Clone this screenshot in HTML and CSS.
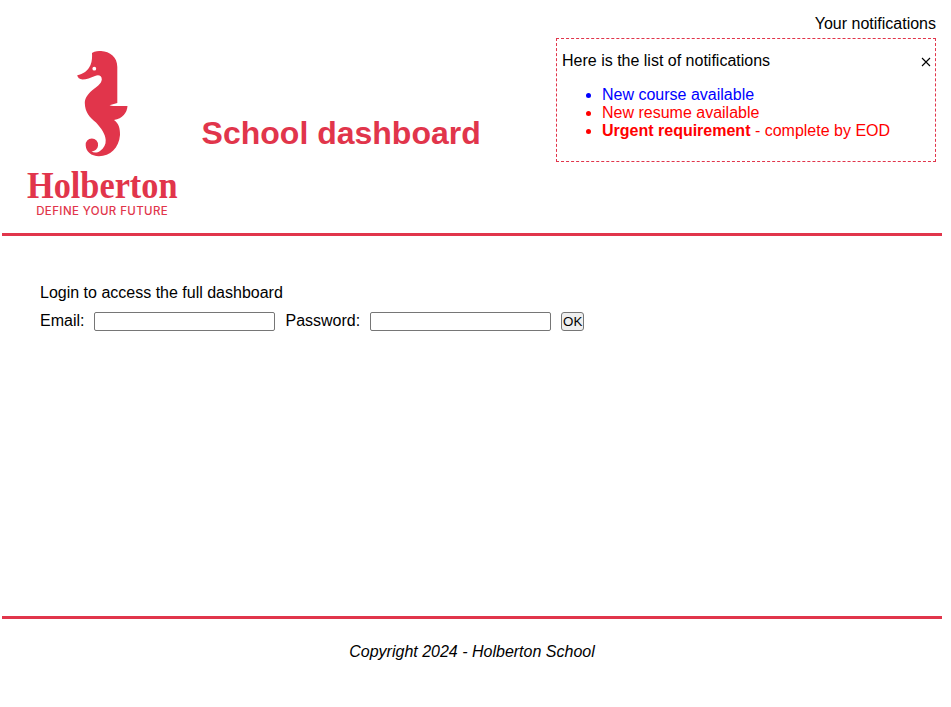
FILE: index.html
```html
<!DOCTYPE html>
<html lang="en">
<head>
<meta charset="utf-8">
<title>School dashboard</title>
<link rel="stylesheet" href="styles.css">
</head>
<body>
<header class="header">
  <svg class="logo" viewBox="2 33 200 200" role="img" aria-label="Holberton logo">
    <path d="M92 53C95 51 99 51 101 51C110 51.500 117.300 57 117.300 67V103L109.500 105.200C112 106 114 106 117 106H127.500C127 113 122.500 118.500 114 120C118.500 123 120.200 128 120 135C119 148 110 156.200 99 156.200C91 156.200 86 151.500 85.700 145.500A6.200 6.200 0 1 1 98 145.500C97.800 148.500 95.500 151 91.500 151.500C94 153.200 97.500 152.800 100 151C104 148 106 144.500 105.700 140C105.300 134 101.500 128.500 96 122.500C89.500 117.500 85 112 84.800 103C84.800 98 88 94 92 90.500C96 87 101.500 84 101.800 79.500C101.800 75.500 98.500 74.500 95 76C90.500 77.800 86.500 79.500 82.500 79.500C79.500 79.200 77.500 77.500 77.200 75.200C83 74 88 71 90.500 65C92.200 61 92.200 57 92 53Z"/>
    <circle class="logo-eye" cx="94.300" cy="68.700" r="1.900"/>
    <text class="logo-name" x="27" y="198.300" textLength="150.500" lengthAdjust="spacingAndGlyphs">Holberton</text>
    <text class="logo-tagline" x="36.200" y="214.700" textLength="132" lengthAdjust="spacingAndGlyphs">DEFINE YOUR FUTURE</text>
  </svg>
  <h1 class="title">School dashboard</h1>
  <section class="notifications">
    <div class="notifications-title">Your notifications</div>
    <div class="notifications-panel">
      <div class="panel-head">
        <p>Here is the list of notifications</p>
        <svg class="close" viewBox="0 0 10 10"><path d="M1 1L9 9M9 1L1 9"/></svg>
      </div>
      <ul>
        <li class="default">New course available</li>
        <li class="urgent">New resume available</li>
        <li class="urgent"><strong>Urgent requirement</strong> - complete by EOD</li>
      </ul>
    </div>
  </section>
</header>
<main class="login">
  <p>Login to access the full dashboard</p>
  <form class="form">
    <label for="email">Email:</label>
    <input id="email" type="email">
    <label for="password">Password:</label>
    <input id="password" type="password">
    <button type="button">OK</button>
  </form>
</main>
<footer class="footer">Copyright 2024 - Holberton School</footer>
</body>
</html>
```
FILE: styles.css
```css
* {
  box-sizing: border-box;
}

body {
  width: 940px;
  margin: 0 0 0 2px;
  background: #fff;
  color: #000;
  font: 16px/18px "Liberation Sans", Arial, sans-serif;
}

.header {
  display: flex;
  align-items: flex-start;
  height: 236px;
  border-bottom: 3px solid #e1354b;
}

.logo {
  width: 200px;
  height: 200px;
  margin-top: 33px;
  fill: #e1354b;
}

.logo .logo-eye {
  fill: #fff;
}

.logo-name {
  font: bold 38.5px "Liberation Serif", serif;
}

.logo-tagline {
  font: 500 11.3px Inter, sans-serif;
  letter-spacing: 0.4px;
}

.title {
  margin: 115px 0 0 -0.4px;
  color: #e1354b;
  font-size: 32px;
  line-height: 36px;
  white-space: nowrap;
}

.notifications {
  width: 380px;
  margin: 15px 6px 0 auto;
}

.notifications-title {
  text-align: right;
}

.notifications-panel {
  height: 124px;
  margin-top: 5px;
  padding: 13px 4px 0 5px;
  border: 1px dashed #e1354b;
}

.panel-head {
  display: flex;
  justify-content: space-between;
}

.panel-head p,
.login p {
  margin: 0;
}

.close {
  width: 10px;
  height: 10px;
  margin-top: 5px;
  fill: none;
  stroke: #000;
  stroke-width: 1.1;
}

ul {
  margin: 16px 0 0;
  padding-left: 40px;
}

.default {
  color: blue;
}

.urgent {
  color: red;
}

.login {
  height: 380px;
  padding: 48px 38px 0;
}

.form {
  display: flex;
  align-items: flex-start;
  margin-top: 10px;
}

.form input {
  width: 181px;
  height: 19px;
  margin: 0 10px;
  padding: 1px 2px;
  border: 1px solid #767676;
  border-radius: 2px;
}

.form button {
  width: 23px;
  height: 19px;
  padding: 0;
  border: 1px solid #767676;
  border-radius: 3px;
  background: #efefef;
  color: #000;
  font: 13.333px "Liberation Sans", Arial, sans-serif;
}

.footer {
  padding-top: 24px;
  border-top: 3px solid #e1354b;
  font-style: italic;
  text-align: center;
}
```
